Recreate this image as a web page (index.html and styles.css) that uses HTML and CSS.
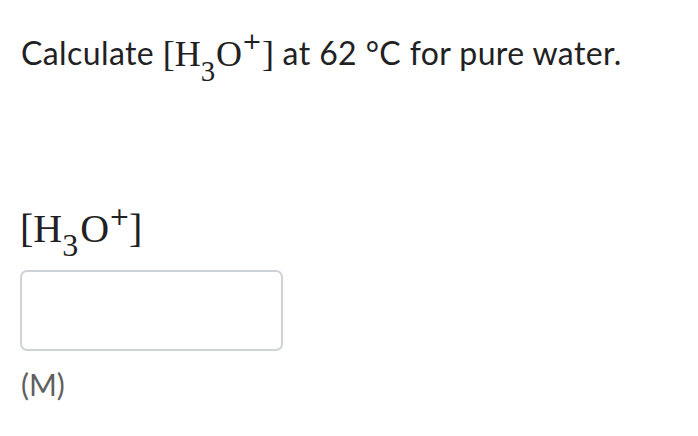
FILE: index.html
```html
<!DOCTYPE html>
<html>
<head>
<meta charset="utf-8">
<link rel="stylesheet" href="styles.css">
</head>
<body>
<div class="page">
  <p class="question">Calculate <span class="math inline">[H<sub>3</sub>O<sup>+</sup>]</span> at 62 °C for pure water.</p>
  <div class="answer">
    <div class="label math">[H<sub>3</sub>O<sup>+</sup>]</div>
    <div class="input"></div>
    <div class="unit">(M)</div>
  </div>
</div>
</body>
</html>
```
FILE: styles.css
```css
* { box-sizing: border-box; }
body { margin: 0; background: #fff; font-family: Lato, "Open Sans", sans-serif; color: #1f2123; }
.page { padding: 30px 20px 0 21px; }
.question { margin: 0; font-size: 32px; line-height: 46px; letter-spacing: 0.4px; }
.math { font-family: "Liberation Serif", "DejaVu Serif", serif; letter-spacing: 0; }
.math sub, .math sup { line-height: 0; }
.math sup { font-family: "DejaVu Sans", sans-serif; font-size: 0.62em; }
.math.inline { font-size: 36px; position: relative; top: 1px; }
.math.inline sub { font-size: 0.8em; vertical-align: -0.52em; margin-right: 1px; }
.math.inline sup { font-size: 0.66em; vertical-align: 0.7em; margin-right: 0; }
.answer { margin-top: 131px; display: flex; flex-direction: column; align-items: flex-start; }
.label { font-size: 40px; line-height: 44px; margin-left: -1px; }
.label sub { font-size: 0.8em; vertical-align: -0.44em; margin-right: 2px; }
.label sup { vertical-align: 0.7em; margin-right: -1px; }
.input { margin-top: 19px; margin-left: -1px; width: 263px; height: 81px; border: 2px solid #cdd3d9; border-radius: 7px; }
.unit { margin-top: 15px; font-size: 30px; color: #5f5f5f; line-height: 36px; }
```
